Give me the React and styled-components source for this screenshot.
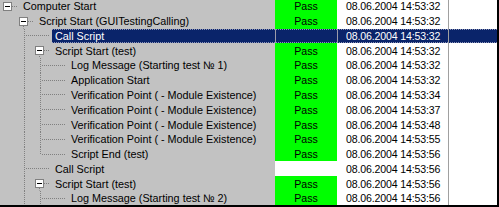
import React from 'react';
import styled, { createGlobalStyle, css } from 'styled-components';

const GlobalStyle = createGlobalStyle`
  html, body {
    margin: 0;
    padding: 0;
    background: #fff;
  }
`;

const DOT = '#808080';
const SEL = '#0a246a';
const V = `repeating-linear-gradient(to bottom, ${DOT} 0 1px, transparent 1px 2px)`;
const H = `repeating-linear-gradient(to right, ${DOT} 0 1px, transparent 1px 2px)`;

const slotArt = {
  none: css``,
  line: css`
    background-image: ${V};
    background-size: 1px 100%;
    background-position: 8px 0;
  `,
  tee: css`
    background-image: ${V}, ${H};
    background-size: 1px 100%, 6px 1px;
    background-position: 8px 0, 10px 50%;
  `,
  elbow: css`
    background-image: ${V}, ${H};
    background-size: 1px 50%, 6px 1px;
    background-position: 8px 0, 10px 50%;
  `,
  hline: css`
    background-image: ${H};
    background-size: calc(100% - 2px) 1px;
    background-position: 0 50%;
  `,
  box: css`
    background-image: ${H};
    background-size: 6px 1px;
    background-position: 12px 50%;
  `,
  boxDown: css`
    background-image: ${H}, ${V};
    background-size: 6px 1px, 1px calc(50% - 5px);
    background-position: 12px 50%, 7px 100%;
  `,
};

const Frame = styled.div`
  width: 499px;
  height: 207px;
  box-sizing: border-box;
  border-right: 2px solid #000;
  border-bottom: 2px solid #000;
  overflow: hidden;
  background: #fff;
  font-family: "Liberation Sans", Arial, sans-serif;
  font-size: 10.6px;
`;

const List = styled.div`
  margin-top: -1px;
  display: flex;
  flex-direction: column;
`;

const Row = styled.div`
  flex: none;
  display: grid;
  grid-template-columns: 275px 62px 111px 1fr;
  height: 14.78px;
`;

const TreeCell = styled.div`
  display: flex;
  align-items: stretch;
  min-width: 0;
  overflow: hidden;
  background: #c2c2c2;
`;

const Slot = styled.span`
  flex: none;
  width: ${p => (p.$last ? 20 : 16)}px;
  display: flex;
  align-items: center;
  background-repeat: no-repeat;
  ${p => slotArt[p.$kind]}
`;

const Box = styled.span`
  width: 9px;
  height: 9px;
  margin-left: 3px;
  box-sizing: border-box;
  border: 1px solid #808080;
  background: #fff;
  display: flex;
  align-items: center;
  justify-content: center;
`;

const Minus = styled.span`
  width: 5px;
  height: 1px;
  background: #000;
`;

const selected = css`
  background: ${SEL};
  color: #fff;
  border-top: 1px dotted #8c93b8;
  border-bottom: 1px dotted #8c93b8;
`;

const Label = styled.span`
  flex: 1;
  min-width: 0;
  box-sizing: border-box;
  display: flex;
  align-items: center;
  padding-left: 3px;
  font-size: 10.8px;
  white-space: nowrap;
  color: #000;
  ${p => p.$sel && selected}
`;

const Status = styled.div`
  box-sizing: border-box;
  display: flex;
  align-items: center;
  justify-content: center;
  color: #000;
  background: ${p => (p.$state === 'pass' ? '#00ff00' : '#fff')};
  ${p => p.$sel && selected}
  ${p => p.$sel && css`box-shadow: inset 1px 0 #9c9caa;`}
`;

const DateCell = styled.div`
  box-sizing: border-box;
  display: flex;
  align-items: center;
  padding-left: 9px;
  letter-spacing: -0.15px;
  white-space: nowrap;
  color: #000;
  background: #fff;
  ${p => p.$sel && selected}
  ${p => p.$sel && css`box-shadow: inset 1px 0 #9c9caa;`}
`;

const Tail = styled.div`
  box-sizing: border-box;
  border-left: 1px solid #a0a0a0;
  background: #fff;
  ${p => p.$sel && selected}
`;

const DAY = '08.06.2004 ';
const VP = 'Verification Point ( - Module Existence)';

const rows = [
  { label: 'Computer Start', slots: ['box'], status: 'pass', time: '14:53:32' },
  { label: 'Script Start (GUITestingCalling)', slots: ['none', 'boxDown'], status: 'pass', time: '14:53:32' },
  { label: 'Call Script', slots: ['none', 'tee', 'hline'], status: 'none', time: '14:53:32', sel: true },
  { label: 'Script Start (test)', slots: ['none', 'line', 'boxDown'], status: 'pass', time: '14:53:32' },
  { label: 'Log Message (Starting test № 1)', slots: ['none', 'line', 'tee', 'hline'], status: 'pass', time: '14:53:32' },
  { label: 'Application Start', slots: ['none', 'line', 'tee', 'hline'], status: 'pass', time: '14:53:32' },
  { label: VP, slots: ['none', 'line', 'tee', 'hline'], status: 'pass', time: '14:53:34' },
  { label: VP, slots: ['none', 'line', 'tee', 'hline'], status: 'pass', time: '14:53:37' },
  { label: VP, slots: ['none', 'line', 'tee', 'hline'], status: 'pass', time: '14:53:48' },
  { label: VP, slots: ['none', 'line', 'tee', 'hline'], status: 'pass', time: '14:53:55' },
  { label: 'Script End (test)', slots: ['none', 'line', 'elbow', 'hline'], status: 'pass', time: '14:53:56' },
  { label: 'Call Script', slots: ['none', 'tee', 'hline'], status: 'empty', time: '14:53:56' },
  { label: 'Script Start (test)', slots: ['none', 'line', 'boxDown'], status: 'pass', time: '14:53:56' },
  { label: 'Log Message (Starting test № 2)', slots: ['none', 'line', 'tee', 'hline'], status: 'pass', time: '14:53:56' },
];

const App = () => {
  return (
    <>
      <GlobalStyle />
      <Frame>
        <List>
          {rows.map((row, index) => (
            <Row key={index}>
              <TreeCell>
                {row.slots.map((kind, i) => (
                  <Slot key={i} $kind={kind} $last={i === row.slots.length - 1}>
                    {(kind === 'box' || kind === 'boxDown') && (
                      <Box><Minus /></Box>
                    )}
                  </Slot>
                ))}
                <Label $sel={row.sel}>{row.label}</Label>
              </TreeCell>
              <Status $state={row.status} $sel={row.sel}>
                {row.status === 'pass' ? 'Pass' : ''}
              </Status>
              <DateCell $sel={row.sel}>{DAY + row.time}</DateCell>
              <Tail $sel={row.sel} />
            </Row>
          ))}
        </List>
      </Frame>
    </>
  );
};

export default App;
